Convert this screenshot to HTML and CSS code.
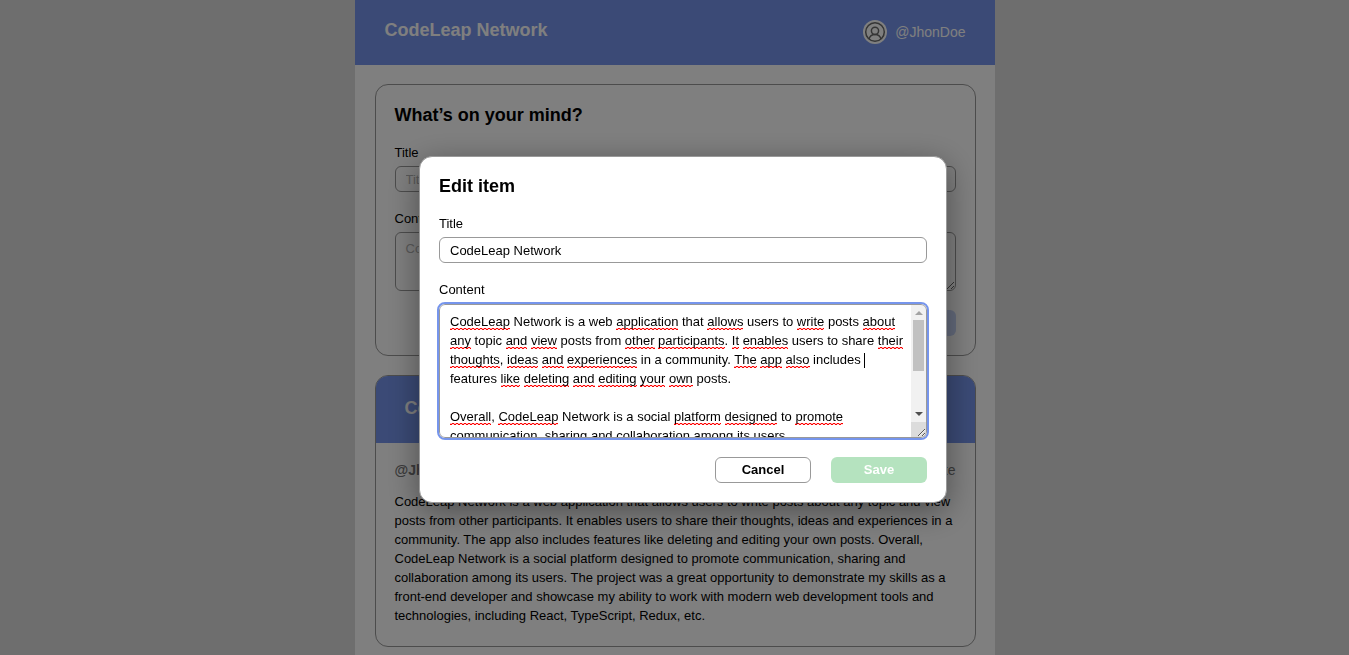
FILE: index.html
```html
<!DOCTYPE html>
<html lang="en">
<head>
<meta charset="utf-8">
<meta name="viewport" content="width=device-width, initial-scale=1">
<title>CodeLeap Network</title>
<link rel="stylesheet" href="styles.css">
</head>
<body>
<div class="page">
  <header class="topbar">
    <h1 class="heading">CodeLeap Network</h1>
    <div class="user">
      <svg class="avatar" viewBox="0 0 24 24" aria-hidden="true">
        <circle cx="12" cy="12" r="12" fill="#fff"/>
        <g fill="none" stroke="#6a6a6a" stroke-width="1.5">
          <circle cx="12" cy="12" r="9.3"/>
          <circle cx="12" cy="10.8" r="3.6"/>
          <path d="M6 19c.8-3.100 3-4.600 6-4.600s5.200 1.500 6 4.600"/>
        </g>
      </svg>
      <span>@JhonDoe</span>
    </div>
  </header>
  <main class="feed">
    <form class="card composer">
      <h2 class="heading">What’s on your mind?</h2>
      <div class="field">
        <label for="new-title">Title</label>
        <input class="control" id="new-title" type="text" placeholder="Title">
      </div>
      <div class="field">
        <label for="new-content">Content</label>
        <textarea class="control short-area" id="new-content" placeholder="Content"></textarea>
      </div>
      <div class="actions">
        <button class="button create" type="submit" disabled>Create</button>
      </div>
    </form>
    <article class="card post">
      <header class="post-head"><h2 class="heading">CodeLeap Network</h2></header>
      <div class="post-body">
        <div class="meta"><strong>@JhonDoe</strong><span>1 minute</span></div>
        <p class="post-text">CodeLeap Network is a web application that allows users to write posts about any topic and view posts from other participants. It enables users to share their thoughts, ideas and experiences in a community. The app also includes features like deleting and editing your own posts. Overall, CodeLeap Network is a social platform designed to promote communication, sharing and collaboration among its users. The project was a great opportunity to demonstrate my skills as a front-end developer and showcase my ability to work with modern web development tools and technologies, including React, TypeScript, Redux, etc.</p>
      </div>
    </article>
  </main>
</div>

<div class="overlay">
  <form class="dialog" role="dialog" aria-modal="true" aria-labelledby="dialog-title">
    <h2 class="heading" id="dialog-title">Edit item</h2>
    <div class="field">
      <label for="edit-title">Title</label>
      <input class="control" id="edit-title" type="text" value="CodeLeap Network">
    </div>
    <div class="field">
      <label for="edit-content">Content</label>
      <div class="editor">
        <div class="marks" aria-hidden="true"><u>CodeLeap</u> Network is a web <u>application</u> that <u>allows</u> users to <u>write</u> posts <u>about</u> <u>any</u> topic <u>and</u> <u>view</u> posts from <u>other</u> <u>participants</u>. <u>It</u> <u>enables</u> users to share <u>their</u> <u>thoughts</u>, <u>ideas</u> <u>and</u> <u>experiences</u> in a community. <u>The</u> <u>app</u> <u>also</u> includes <i class="caret"></i>features <u>like</u> <u>deleting</u> <u>and</u> <u>editing</u> <u>your</u> <u>own</u> posts.

<u>Overall</u>, <u>CodeLeap</u> Network is a social <u>platform</u> <u>designed</u> to <u>promote</u></div>
        <div class="scrollbar" aria-hidden="true">
          <span class="arrow up"></span>
          <span class="thumb"></span>
          <span class="arrow down"></span>
          <span class="corner"></span>
        </div>
        <textarea class="control long-area" id="edit-content" spellcheck="false">CodeLeap Network is a web application that allows users to write posts about any topic and view posts from other participants. It enables users to share their thoughts, ideas and experiences in a community. The app also includes features like deleting and editing your own posts.

Overall, CodeLeap Network is a social platform designed to promote communication, sharing and collaboration among its users.</textarea>
      </div>
    </div>
    <div class="actions">
      <button class="button cancel" type="button">Cancel</button>
      <button class="button save" type="submit" disabled>Save</button>
    </div>
  </form>
</div>
</body>
</html>
```
FILE: styles.css
```css
*, *::before, *::after { box-sizing: border-box; }

body {
  margin: 0;
  height: 100vh;
  overflow: hidden;
  background: #ddd;
  color: #000;
  font: 13px/16px "Liberation Sans", Arial, sans-serif;
}

.page {
  max-width: 640px;
  min-height: 100vh;
  margin: 0 auto;
  background: #fff;
}

.heading {
  margin: 0;
  font-size: 18px;
  line-height: 20px;
  font-weight: 700;
}

.topbar {
  display: flex;
  align-items: center;
  justify-content: space-between;
  height: 65px;
  padding: 0 29px 5px 30px;
  background: #7695ec;
  color: #fff;
}

.user {
  display: flex;
  align-items: center;
  gap: 8px;
  padding-top: 3px;
  font-size: 14px;
}

.avatar { width: 24px; height: 24px; }

.feed {
  display: grid;
  gap: 19px;
  padding: 19px 19px 19px 20px;
}

.card {
  border: 1px solid #999;
  border-radius: 13px;
  overflow: hidden;
}

.composer,
.dialog {
  display: grid;
  gap: 19px;
  padding: 19px;
}

.composer { padding-top: 20px; }

.composer .heading,
.dialog .heading { padding-bottom: 1px; }

.field {
  display: grid;
  gap: 5px;
}

.control {
  display: block;
  width: 100%;
  height: 26px;
  margin: 0;
  padding: 0 10px;
  border: 1px solid #999;
  border-radius: 6px;
  background: transparent;
  color: #000;
  font: inherit;
}

.control::placeholder { color: #b3b3b3; }

.short-area {
  height: 59px;
  padding: 8px 10px;
  resize: vertical;
}

.actions {
  display: flex;
  justify-content: flex-end;
  gap: 20px;
}

.button {
  width: 96px;
  height: 26px;
  padding: 0;
  border: 0;
  border-radius: 6px;
  color: #fff;
  font: inherit;
  font-weight: 700;
}

.create { background: #c8d5f7; }
.save { background: #b5e3bf; }
.cancel {
  border: 1px solid #999;
  background: #fff;
  color: #000;
}

.post-head {
  display: flex;
  align-items: center;
  height: 67px;
  padding: 0 29px 3px;
  background: #7695ec;
  color: #fff;
}

.post-body {
  display: grid;
  gap: 14px;
  padding: 19px 10px 21px 19px;
}

.meta {
  display: flex;
  justify-content: space-between;
  padding-right: 9px;
  color: #777;
  font-size: 14px;
}

.post-text { margin: 0; line-height: 19px; }

.overlay {
  position: fixed;
  inset: 0;
  display: flex;
  align-items: center;
  justify-content: center;
  padding: 4px 0 0 17px;
  background: rgba(0, 0, 0, 0.5);
}

.dialog {
  width: 100%;
  max-width: 528px;
  border: 1px solid #999;
  border-radius: 13px;
  background: #fff;
  box-shadow: 0 8px 32px rgba(0, 0, 0, 0.4);
}

.editor {
  position: relative;
  margin-top: 1px;
  border-radius: 6px;
  outline: 2px solid #7695ec;
  overflow: hidden;
}

.long-area {
  position: relative;
  height: 134px;
  padding: 7px 20px 0 10px;
  line-height: 19px;
  overflow: hidden;
  resize: vertical;
  outline: 0;
}

.marks {
  position: absolute;
  inset: 0;
  padding: 8px 21px 0 11px;
  color: transparent;
  line-height: 19px;
  white-space: pre-wrap;
}

.marks u {
  padding-bottom: 1px;
  background:
    linear-gradient(90deg, #f00 2px, rgba(255, 0, 0, 0.15) 2px) 0 100% / 4px 1px repeat-x,
    linear-gradient(90deg, rgba(255, 0, 0, 0.3) 2px, #f00 2px) 0 calc(100% - 1px) / 4px 1px repeat-x;
  text-decoration: none;
}

.caret {
  display: inline-block;
  width: 0;
  height: 15px;
  margin-right: -1px;
  border-left: 1px solid #000;
  vertical-align: middle;
}

.scrollbar {
  position: absolute;
  inset: 1px 1px 1px auto;
  display: flex;
  flex-direction: column;
  align-items: center;
  width: 15px;
  background: #f1f1f1;
}

.thumb {
  width: 11px;
  height: 51px;
  margin-top: 5px;
  background: #c1c1c1;
}

.arrow {
  border: 4px solid transparent;
  border-top-width: 0;
  border-bottom-width: 0;
}

.up { margin-top: 6px; border-bottom: 4px solid #a3a3a3; }
.down { margin-top: auto; border-top: 4px solid #505050; }

.corner {
  width: 15px;
  height: 15px;
  margin-top: 6px;
  background: #dcdcdc;
}
```
